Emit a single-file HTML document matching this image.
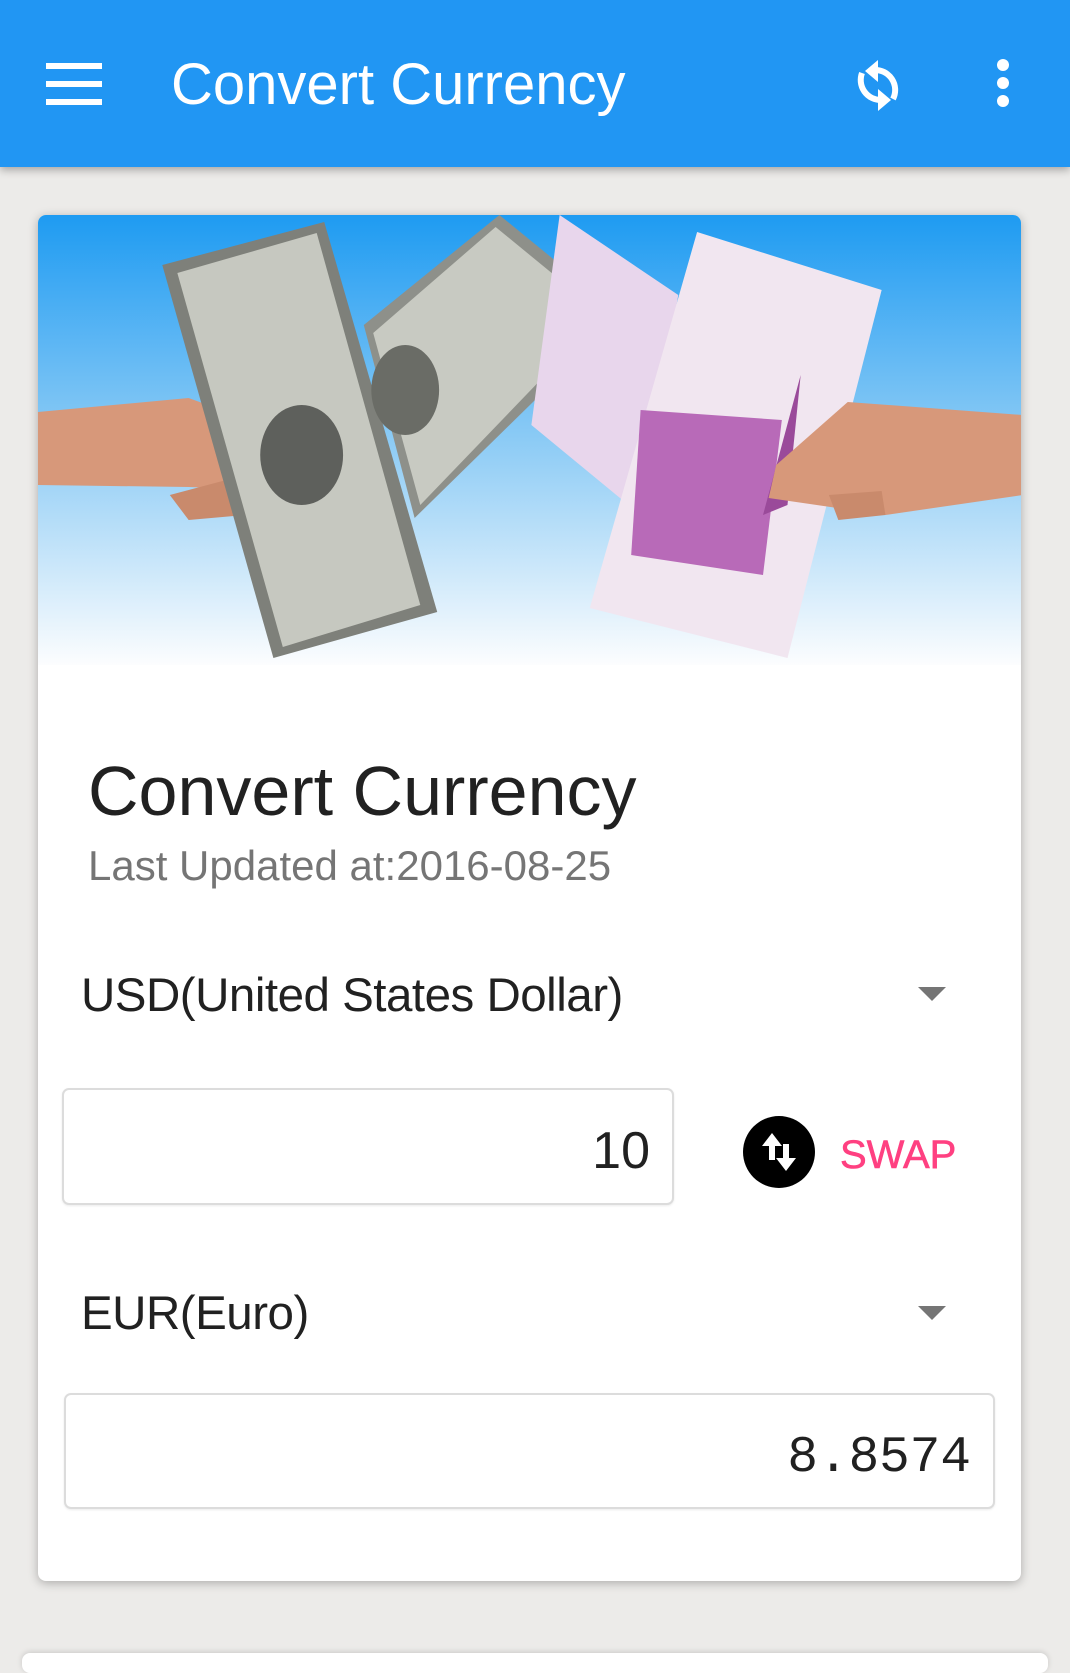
<!DOCTYPE html>
<html><head><meta charset="utf-8"><style>
*{margin:0;padding:0;box-sizing:border-box}
body{width:1070px;height:1654px;background:#ECEBE9;position:relative;overflow:hidden;font-family:"Liberation Sans",sans-serif}
.bar{position:absolute;left:0;top:0;width:1070px;height:167px;background:#2196F3;box-shadow:0 3px 8px rgba(0,0,0,.3);z-index:2}
.t{position:absolute;white-space:nowrap;line-height:1}
.card{position:absolute;left:38px;top:215px;width:983px;height:1366px;background:#fff;border-radius:8px;box-shadow:0 2px 10px rgba(0,0,0,.28);overflow:hidden}
.card2{position:absolute;left:22px;top:1653px;width:1026px;height:20px;background:#fff;border-radius:8px;box-shadow:0 -1px 6px rgba(0,0,0,.15)}
.box{position:absolute;border:2px solid #dcdcdc;border-radius:7px;background:#fff;box-shadow:0 1px 2px rgba(0,0,0,.08)}
.tri{position:absolute;width:0;height:0;border-left:14px solid transparent;border-right:14px solid transparent;border-top:14px solid #757575}
</style></head><body>
<div class="bar">
  <div style="position:absolute;left:46px;top:63px;width:56px;height:6px;background:#fff"></div>
  <div style="position:absolute;left:46px;top:81px;width:56px;height:6px;background:#fff"></div>
  <div style="position:absolute;left:46px;top:99px;width:56px;height:6px;background:#fff"></div>
  <div class="t" style="left:171px;top:56px;font-size:58px;color:#fff">Convert Currency</div>
  <svg style="position:absolute;left:848px;top:52px" width="60" height="66" viewBox="0 0 60 66">
    <path d="M45 47 A20 20 0 0 0 26 18" fill="none" stroke="#fff" stroke-width="6"/>
    <polygon points="30,8 17,19 30,30" fill="#fff"/>
    <path d="M14 21 A20 20 0 0 0 33 48" fill="none" stroke="#fff" stroke-width="6"/>
    <polygon points="30,37 43,48 30,59" fill="#fff"/>
  </svg>
  <div style="position:absolute;left:997px;top:59px;width:12px;height:12px;border-radius:50%;background:#fff"></div>
  <div style="position:absolute;left:997px;top:77px;width:12px;height:12px;border-radius:50%;background:#fff"></div>
  <div style="position:absolute;left:997px;top:95px;width:12px;height:12px;border-radius:50%;background:#fff"></div>
</div>

<div class="card">
  <svg width="983" height="450" viewBox="0 0 522 450" preserveAspectRatio="none" style="display:block">
    <defs><linearGradient id="sky" x1="0" y1="0" x2="0" y2="1">
      <stop offset="0" stop-color="#1E9BF2"/><stop offset=".5" stop-color="#8CCBF5"/><stop offset="1" stop-color="#FCFDFE"/></linearGradient></defs>
    <rect width="522" height="450" fill="url(#sky)"/>
    <polygon points="0,197 80,183 112,205 128,240 125,275 80,272 0,270" fill="#D7987A"/>
    <polygon points="70,280 100,265 110,300 80,305" fill="#C98A6C"/>
    <polygon points="173,110 245,0 310,100 200,303" fill="#8E908A"/>
    <polygon points="178,118 243,12 300,100 203,290" fill="#C8CAC2"/>
    <polygon points="66,50 152,7 212,397 125,443" fill="#7E807A"/>
    <polygon points="74,58 148,18 203,390 130,432" fill="#C6C8C0"/>
    <ellipse cx="140" cy="240" rx="22" ry="50" fill="#5E605C"/>
    <ellipse cx="195" cy="175" rx="18" ry="45" fill="#6A6C66"/>
    <polygon points="277,0 340,80 320,300 262,210" fill="#E8D6EC"/>
    <polygon points="350,17 448,75 398,443 293,393" fill="#F1E6F0"/>
    <polygon points="320,195 395,205 385,360 315,340" fill="#B86AB8"/>
    <polygon points="398,290 405,160 385,300" fill="#9A4A9A"/>
    <polygon points="430,187 523,200 523,280 450,300 388,283 392,250" fill="#D7987A"/>
    <polygon points="420,280 448,276 450,300 425,305" fill="#C98A6C"/>
  </svg>
  <div class="t" style="left:50px;top:541px;font-size:70px;color:#212121">Convert Currency</div>
  <div class="t" style="left:50px;top:630px;font-size:42px;color:#757575">Last Updated at:2016-08-25</div>
  <div class="t" style="left:43px;top:757px;font-size:47.5px;color:#212121;letter-spacing:-.5px">USD(United States Dollar)</div>
  <div class="tri" style="left:880px;top:772px"></div>
  <div class="t" style="left:43px;top:1075px;font-size:47.5px;color:#212121;letter-spacing:-.5px">EUR(Euro)</div>
  <div class="tri" style="left:880px;top:1091px"></div>
</div>
<div class="card2"></div>

<div class="box" style="left:62px;top:1088px;width:612px;height:117px"></div>
<div class="t" style="right:420px;top:1125px;font-size:52px;color:#212121">10</div>
<svg style="position:absolute;left:743px;top:1116px" width="72" height="72" viewBox="0 0 72 72">
  <circle cx="36" cy="36" r="36" fill="#000"/>
  <polygon points="29,17 19,30 26,30 26,44 32,44 32,30 39,30" fill="#fff"/>
  <polygon points="43,55 53,42 46,42 46,28 40,28 40,42 33,42" fill="#fff"/>
</svg>
<div class="t" style="left:840px;top:1135px;font-size:40px;color:#FF4081;-webkit-text-stroke:.6px #FF4081">SWAP</div>

<div class="box" style="left:64px;top:1393px;width:931px;height:116px"></div>
<div class="t" style="right:99px;top:1433px;font-size:51px;color:#212121;font-family:'Liberation Mono',monospace">8.8574</div>
</body></html>
